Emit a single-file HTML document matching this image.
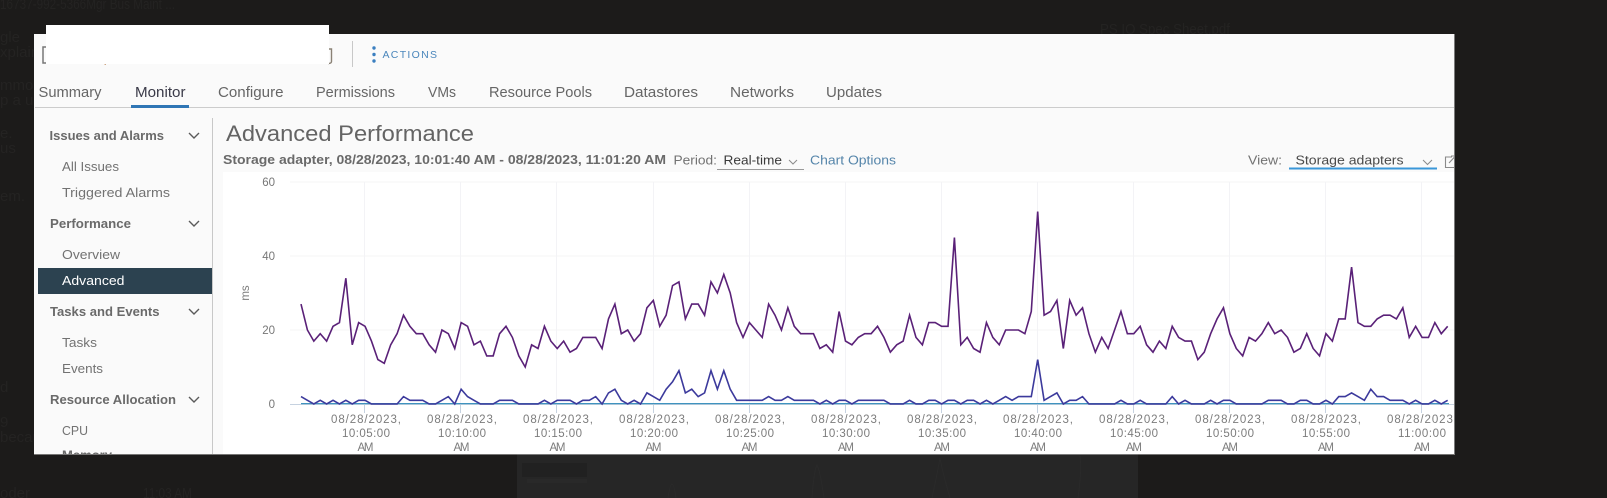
<!DOCTYPE html>
<html lang="en">
<head>
<meta charset="utf-8">
<title>Advanced Performance</title>
<style>
html,body{margin:0;padding:0;width:1607px;height:498px;overflow:hidden;background:#1c1b1a}
svg{display:block;font-family:"Liberation Sans",sans-serif}
.tab{font-size:14.5px;fill:#666}
.h{font-size:13px;font-weight:bold;fill:#6a6a6a}
.i{font-size:13px;fill:#727272}
.g{font-size:15px;fill:#242322}
.y{font-size:11.5px;fill:#777;text-anchor:end}
.x{font-size:11.5px;fill:#7c7c7c}
</style>
</head>
<body>
<svg width="1607" height="498" viewBox="0 0 1607 498" xmlns="http://www.w3.org/2000/svg">
<defs><clipPath id="p"><rect x="34" y="34" width="1420.5" height="420.5"/></clipPath></defs>
<rect width="1607" height="498" fill="#1c1b1a"/>
<rect x="517" y="454" width="621" height="44" fill="#262626"/>
<rect x="522" y="463" width="65" height="14" fill="#212121"/>
<rect x="527" y="479" width="60" height="4" fill="#292929"/>
<g fill="none" stroke="#2a2a2a" stroke-width="1">
<path d="M668 498Q672 470 676 498M812 498Q814 470 817 465Q820 470 824 498M932 498Q938 470 940 458Q942 470 950 498M1078 498Q1082 470 1080 456"/>
</g>
<text class="g" x="0" y="9" textLength="175" lengthAdjust="spacingAndGlyphs">16737-992-5366Mgr Bus Maint ...</text>
<text class="g" x="0" y="42">gle</text>
<text class="g" x="0" y="57">xplain</text>
<text class="g" x="0" y="90">mmon</text>
<text class="g" x="0" y="105">p a use</text>
<text class="g" x="0" y="138">e.</text>
<text class="g" x="0" y="153">us</text>
<text class="g" x="0" y="201">em.</text>
<text class="g" x="0" y="392">d</text>
<text class="g" x="0" y="427">9</text>
<text class="g" x="0" y="442">becau</text>
<text class="g" x="0" y="498">oder</text>
<text class="g" x="143" y="498" textLength="49" lengthAdjust="spacingAndGlyphs">11:03 AM</text>
<text class="g" x="1100" y="34" textLength="130" lengthAdjust="spacingAndGlyphs">PS IO Spec Sheet.pdf</text>

<g clip-path="url(#p)">
<rect x="34" y="34" width="1421" height="421" fill="#fafafa"/>
<rect x="223" y="172" width="1232" height="283" fill="#fff"/>

<!-- header -->
<path d="M46 47H43V63H46" fill="none" stroke="#777" stroke-width="1.5"/>
<path d="M328 49H331.500V61.500Q331.500 63.500 328 63.500" fill="none" stroke="#8a8175" stroke-width="1.4"/>
<rect x="104.500" y="63.500" width="1.500" height="1.500" fill="#cfa98a"/>
<rect x="352" y="41" width="1" height="26" fill="#c8c8c8"/>
<circle cx="374" cy="48" r="1.7" fill="#3b7fc0"/>
<circle cx="374" cy="54.5" r="1.7" fill="#3b7fc0"/>
<circle cx="374" cy="61" r="1.7" fill="#3b7fc0"/>
<text x="382.5" y="58" font-size="10.5" fill="#4a86bb" textLength="54.5" lengthAdjust="spacing">ACTIONS</text>

<!-- tabs -->
<text class="tab" x="38.5" y="97" textLength="63" lengthAdjust="spacingAndGlyphs">Summary</text>
<text class="tab" x="135" y="97" textLength="50.5" lengthAdjust="spacingAndGlyphs" style="fill:#3a3a48">Monitor</text>
<text class="tab" x="218" y="97" textLength="65.5" lengthAdjust="spacingAndGlyphs">Configure</text>
<text class="tab" x="316" y="97" textLength="79" lengthAdjust="spacingAndGlyphs">Permissions</text>
<text class="tab" x="428" y="97" textLength="28" lengthAdjust="spacingAndGlyphs">VMs</text>
<text class="tab" x="489" y="97" textLength="103" lengthAdjust="spacingAndGlyphs">Resource Pools</text>
<text class="tab" x="624" y="97" textLength="74" lengthAdjust="spacingAndGlyphs">Datastores</text>
<text class="tab" x="730" y="97" textLength="64" lengthAdjust="spacingAndGlyphs">Networks</text>
<text class="tab" x="826" y="97" textLength="56" lengthAdjust="spacingAndGlyphs">Updates</text>
<rect x="35" y="107" width="1420" height="1" fill="#cccccc"/>
<rect x="131" y="105" width="58" height="3" fill="#2f76b5"/>

<!-- sidebar -->
<rect x="212" y="118" width="1" height="337" fill="#c8c8c8"/>
<rect x="38" y="268" width="174" height="26" fill="#2c4250"/>
<text class="h" x="49.5" y="140" textLength="114.5" lengthAdjust="spacingAndGlyphs">Issues and Alarms</text>
<text class="i" x="62" y="171" textLength="57" lengthAdjust="spacingAndGlyphs">All Issues</text>
<text class="i" x="62" y="197" textLength="108" lengthAdjust="spacingAndGlyphs">Triggered Alarms</text>
<text class="h" x="50" y="228" textLength="81" lengthAdjust="spacingAndGlyphs">Performance</text>
<text class="i" x="62" y="259" textLength="58" lengthAdjust="spacingAndGlyphs">Overview</text>
<text class="i" x="62" y="285" textLength="62.5" lengthAdjust="spacingAndGlyphs" style="fill:#fff">Advanced</text>
<text class="h" x="50" y="316" textLength="109.5" lengthAdjust="spacingAndGlyphs">Tasks and Events</text>
<text class="i" x="62" y="347" textLength="35" lengthAdjust="spacingAndGlyphs">Tasks</text>
<text class="i" x="62" y="373" textLength="41" lengthAdjust="spacingAndGlyphs">Events</text>
<text class="h" x="50" y="404" textLength="126" lengthAdjust="spacingAndGlyphs">Resource Allocation</text>
<text class="i" x="62" y="435" font-size="13.5" textLength="26" lengthAdjust="spacingAndGlyphs">CPU</text>
<text class="h" x="62" y="459.500" textLength="50" lengthAdjust="spacingAndGlyphs">Memory</text>
<g fill="none" stroke="#5a5a5a" stroke-width="1.4">
<path d="M189 133L194 138L199 133"/>
<path d="M189 221L194 226L199 221"/>
<path d="M189 309L194 314L199 309"/>
<path d="M189 397L194 402L199 397"/>
</g>

<!-- title row -->
<text x="226" y="141" font-size="22" fill="#646464" textLength="248" lengthAdjust="spacingAndGlyphs">Advanced Performance</text>
<text x="223" y="164" font-size="12.5" font-weight="bold" fill="#6a6a6a" textLength="443" lengthAdjust="spacingAndGlyphs">Storage adapter, 08/28/2023, 10:01:40 AM - 08/28/2023, 11:01:20 AM</text>
<text x="673.5" y="164.5" font-size="13" fill="#727272" textLength="43.5" lengthAdjust="spacingAndGlyphs">Period:</text>
<text x="723.5" y="164.5" font-size="13" fill="#3a3a3a" textLength="58.5" lengthAdjust="spacingAndGlyphs">Real-time</text>
<path d="M789 160L793 164L797 160" fill="none" stroke="#8a8a8a" stroke-width="1"/>
<rect x="717" y="169" width="87" height="1" fill="#9a9a9a"/>
<text x="810" y="164.5" font-size="13" fill="#5585aa" textLength="86" lengthAdjust="spacingAndGlyphs">Chart Options</text>
<text x="1248" y="164.5" font-size="13" fill="#727272" textLength="34" lengthAdjust="spacingAndGlyphs">View:</text>
<text x="1295.5" y="164.5" font-size="13" fill="#4a4a4a" textLength="108" lengthAdjust="spacingAndGlyphs">Storage adapters</text>
<path d="M1423 160L1427.5 164.5L1432 160" fill="none" stroke="#8a8a8a" stroke-width="1"/>
<rect x="1289" y="167.5" width="148" height="2" fill="#3a97d8"/>
<path d="M1452 157H1445.5V167.5H1455M1449 163L1455 156.500M1451 156H1455V160" fill="none" stroke="#8a8a8a" stroke-width="1.1"/>

<!-- grid -->
<g fill="#f5f5f5">
<rect x="290" y="181.500" width="1165" height="1"/>
<rect x="290" y="255.500" width="1165" height="1"/>
<rect x="290" y="329.500" width="1165" height="1"/>
</g>
<g stroke="#f3f3f6" stroke-width="1">
<path d="M364.500 182V404M460.500 182V404M556.500 182V404M653.500 182V404M749.500 182V404M845.500 182V404M941.500 182V404M1037.500 182V404M1133.500 182V404M1229.500 182V404M1325.500 182V404M1421.500 182V404"/>
</g>
<g stroke="#c6d2e0" stroke-width="1">
<path d="M290 404.500H1455"/>
<path d="M364.500 404V413M460.500 404V413M556.500 404V413M653.500 404V413M749.500 404V413M845.500 404V413M941.500 404V413M1037.500 404V413M1133.500 404V413M1229.500 404V413M1325.500 404V413M1421.500 404V413"/>
</g>
<text class="y" x="275" y="186">60</text>
<text class="y" x="275" y="260">40</text>
<text class="y" x="275" y="334">20</text>
<text class="y" x="275" y="408">0</text>
<text x="0" y="0" font-size="11.5" fill="#7c7c7c" text-anchor="middle" transform="translate(249,293) rotate(-90)">ms</text>

<!-- series -->
<rect x="301" y="403" width="1148" height="1.2" fill="#3f93bf"/>
<g transform="translate(301,404) scale(6.406,-3.7)" fill="none" stroke-linejoin="miter">
<polyline vector-effect="non-scaling-stroke" stroke="#3c3a9c" stroke-width="1.6" points="0,2 1,1 2,0 3,1 4,0 5,1 6,0 7,1 8,0 9,1 10,1 11,0 12,0 13,0 14,0 15,0 16,2 17,1 18,1 19,1 20,0 21,0 22,1 23,2 24,0 25,4 26,2 27,1 28,0 29,0 30,0 31,1 32,1 33,1 34,0 35,0 36,0 37,0 38,1 39,0 40,1 41,1 42,1 43,0 44,1 45,1 46,2 47,0 48,3 49,4 50,1 51,0 52,1 53,0 54,3 55,2 56,1 57,4 58,6 59,9 60,3 61,4 62,2 63,3 64,9 65,4 66,9 67,4 68,1 69,1 70,1 71,1 72,1 73,2 74,1 75,1 76,2 77,1 78,1 79,1 80,1 81,0 82,1 83,0 84,1 85,1 86,0 87,1 88,1 89,1 90,1 91,1 92,0 93,0 94,0 95,1 96,0 97,0 98,1 99,1 100,0 101,1 102,1 103,0 104,1 105,1 106,0 107,1 108,0 109,1 110,2 111,1 112,2 113,2 114,2 115,12 116,1 117,2 118,3 119,0 120,1 121,1 122,2 123,0 124,0 125,0 126,0 127,0 128,1 129,0 130,0 131,1 132,0 133,0 134,0 135,0 136,2 137,0 138,1 139,0 140,0 141,0 142,1 143,0 144,1 145,1 146,0 147,0 148,0 149,0 150,0 151,1 152,1 153,1 154,0 155,0 156,1 157,1 158,0 159,0 160,1 161,0 162,2 163,2 164,3 165,2 166,1 167,4 168,2 169,2 170,1 171,1 172,1 173,0 174,1 175,0 176,0 177,1 178,0 179,1"/>
<polyline vector-effect="non-scaling-stroke" stroke="#5a2178" stroke-width="1.6" points="0,27 1,20 2,17 3,19 4,17 5,21 6,22 7,34 8,16 9,22 10,21 11,17 12,12 13,11 14,16 15,19 16,24 17,21 18,19 19,19 20,16 21,14 22,20 23,19 24,15 25,22 26,21 27,16 28,17 29,13 30,13 31,19 32,21 33,18 34,13 35,10 36,16 37,15 38,21 39,17 40,15 41,17 42,14 43,15 44,18 45,18 46,18 47,15 48,23 49,27 50,19 51,20 52,17 53,19 54,26 55,28 56,21 57,24 58,32 59,33 60,23 61,27 62,27 63,24 64,33 65,30 66,35 67,30 68,22 69,18 70,22 71,20 72,18 73,27 74,24 75,20 76,26 77,21 78,19 79,19 80,19 81,15 82,16 83,14 84,25 85,17 86,16 87,18 88,19 89,19 90,21 91,18 92,14 93,16 94,17 95,24 96,18 97,16 98,22 99,22 100,21 101,21 102,45 103,16 104,18 105,15 106,14 107,22 108,18 109,16 110,20 111,20 112,20 113,19 114,25 115,52 116,24 117,25 118,28 119,15 120,28 121,24 122,26 123,19 124,14 125,18 126,15 127,20 128,25 129,19 130,19 131,21 132,16 133,14 134,17 135,15 136,21 137,18 138,17 139,17 140,12 141,14 142,19 143,23 144,26 145,19 146,15 147,13 148,18 149,17 150,19 151,22 152,19 153,20 154,18 155,14 156,15 157,19 158,15 159,13 160,19 161,17 162,23 163,23 164,37 165,22 166,21 167,21 168,23 169,24 170,24 171,23 172,26 173,18 174,21 175,18 176,18 177,22 178,19 179,21"/>
</g>

<!-- x labels -->
<g class="xl">
<text class="x" x="331" y="423" textLength="70" lengthAdjust="spacing">08/28/2023,</text><text class="x" x="342" y="437" textLength="48" lengthAdjust="spacing">10:05:00</text><text class="x" x="357.500" y="451" textLength="16" lengthAdjust="spacing">AM</text>
<text class="x" x="427" y="423" textLength="70" lengthAdjust="spacing">08/28/2023,</text><text class="x" x="438" y="437" textLength="48" lengthAdjust="spacing">10:10:00</text><text class="x" x="453.500" y="451" textLength="16" lengthAdjust="spacing">AM</text>
<text class="x" x="523" y="423" textLength="70" lengthAdjust="spacing">08/28/2023,</text><text class="x" x="534" y="437" textLength="48" lengthAdjust="spacing">10:15:00</text><text class="x" x="549.500" y="451" textLength="16" lengthAdjust="spacing">AM</text>
<text class="x" x="619" y="423" textLength="70" lengthAdjust="spacing">08/28/2023,</text><text class="x" x="630" y="437" textLength="48" lengthAdjust="spacing">10:20:00</text><text class="x" x="645.500" y="451" textLength="16" lengthAdjust="spacing">AM</text>
<text class="x" x="715" y="423" textLength="70" lengthAdjust="spacing">08/28/2023,</text><text class="x" x="726" y="437" textLength="48" lengthAdjust="spacing">10:25:00</text><text class="x" x="741.500" y="451" textLength="16" lengthAdjust="spacing">AM</text>
<text class="x" x="811" y="423" textLength="70" lengthAdjust="spacing">08/28/2023,</text><text class="x" x="822" y="437" textLength="48" lengthAdjust="spacing">10:30:00</text><text class="x" x="838" y="451" textLength="16" lengthAdjust="spacing">AM</text>
<text class="x" x="907" y="423" textLength="70" lengthAdjust="spacing">08/28/2023,</text><text class="x" x="918" y="437" textLength="48" lengthAdjust="spacing">10:35:00</text><text class="x" x="934" y="451" textLength="16" lengthAdjust="spacing">AM</text>
<text class="x" x="1003" y="423" textLength="70" lengthAdjust="spacing">08/28/2023,</text><text class="x" x="1014" y="437" textLength="48" lengthAdjust="spacing">10:40:00</text><text class="x" x="1030" y="451" textLength="16" lengthAdjust="spacing">AM</text>
<text class="x" x="1099" y="423" textLength="70" lengthAdjust="spacing">08/28/2023,</text><text class="x" x="1110" y="437" textLength="48" lengthAdjust="spacing">10:45:00</text><text class="x" x="1126" y="451" textLength="16" lengthAdjust="spacing">AM</text>
<text class="x" x="1195" y="423" textLength="70" lengthAdjust="spacing">08/28/2023,</text><text class="x" x="1206" y="437" textLength="48" lengthAdjust="spacing">10:50:00</text><text class="x" x="1222" y="451" textLength="16" lengthAdjust="spacing">AM</text>
<text class="x" x="1291" y="423" textLength="70" lengthAdjust="spacing">08/28/2023,</text><text class="x" x="1302" y="437" textLength="48" lengthAdjust="spacing">10:55:00</text><text class="x" x="1318" y="451" textLength="16" lengthAdjust="spacing">AM</text>
<text class="x" x="1387" y="423" textLength="70" lengthAdjust="spacing">08/28/2023,</text><text class="x" x="1398" y="437" textLength="48" lengthAdjust="spacing">11:00:00</text><text class="x" x="1414" y="451" textLength="16" lengthAdjust="spacing">AM</text>
</g>
<rect x="34" y="454" width="1421" height="1" fill="#cfcfcf"/>
</g>
<rect x="1454" y="34" width="1" height="421" fill="#7a7a7a"/>

<!-- redaction -->
<rect x="46" y="25" width="283" height="39" fill="#fff"/>
</svg>
</body>
</html>
